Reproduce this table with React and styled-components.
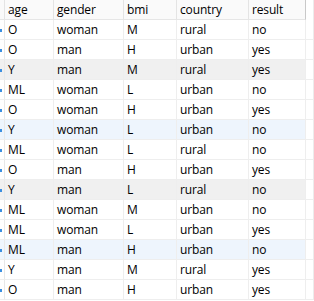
import React from "react";
import styled, { createGlobalStyle } from "styled-components";

const Global = createGlobalStyle`
  html, body { margin: 0; padding: 0; background: #ffffff; }
  body { font-family: "Open Sans", "Noto Sans", sans-serif; font-size: 12px; color: #000000; letter-spacing: -0.15px; }
`;

const COLS = "5px 49px 70px 53px 72px 57px 8px";

const Table = styled.div`
  width: 314px;
  display: grid;
  grid-template-columns: ${COLS};
`;

const HeadCell = styled.div`
  height: 19px;
  line-height: 19px;
  padding-left: ${p => (p.$edge ? 0 : 3)}px;
  background: #fafafa;
  border-bottom: 1px solid #e6e6e6;
  border-right: 1px solid ${p => (p.$last ? "#c9c9c9" : "#e4e4e4")};
  white-space: nowrap;
  overflow: hidden;
`;

const TailHead = styled.div`
  height: 20px;
  background: #ffffff;
  border-right: 1px solid #ececec;
`;

const Cell = styled.div`
  height: 19px;
  line-height: 19px;
  padding-left: 3px;
  background: ${p => p.$bg};
  border-bottom: 1px solid #eeeeee;
  border-right: 1px solid #eeeeee;
  white-space: nowrap;
  overflow: hidden;
`;

const Marker = styled.div`
  height: 19px;
  background: ${p => p.$bg};
  border-bottom: 1px solid #eeeeee;
  border-right: 1px solid #e8e8e8;
  display: flex;
  align-items: center;
`;

const Dot = styled.span`
  width: 2px;
  height: 3px;
  background: #3b8fe0;
  margin-top: 1px;
`;

const Tail = styled.div`
  height: 19px;
  background: #ffffff;
  border-bottom: 1px solid #eeeeee;
  border-right: 1px solid #ececec;
`;

const headers = ["age", "gender", "bmi", "country", "result"];
const rows = [
  ["O", "woman", "M", "rural", "no"],
  ["O", "man", "H", "urban", "yes"],
  ["Y", "man", "M", "rural", "yes"],
  ["ML", "woman", "L", "urban", "no"],
  ["O", "woman", "H", "urban", "yes"],
  ["Y", "woman", "L", "urban", "no"],
  ["ML", "woman", "L", "rural", "no"],
  ["O", "man", "H", "urban", "yes"],
  ["Y", "man", "L", "rural", "no"],
  ["ML", "woman", "M", "urban", "no"],
  ["ML", "woman", "L", "urban", "yes"],
  ["ML", "man", "H", "urban", "no"],
  ["Y", "man", "M", "rural", "yes"],
  ["O", "man", "H", "urban", "yes"],
];

const bgFor = i => {
  if (i === 2 || i === 8) return "#f0f0f0";
  if (i === 5 || i === 11) return "#eef5fd";
  return "#ffffff";
};

export default function App() {
  return (
    <>
      <Global />
      <Table>
        <HeadCell $edge />
        {headers.map((h, i) => (
          <HeadCell key={h} $last={i === headers.length - 1}>{h}</HeadCell>
        ))}
        <TailHead />
        {rows.map((r, i) => (
          <React.Fragment key={i}>
            <Marker $bg={bgFor(i)}><Dot /></Marker>
            {r.map((v, j) => (
              <Cell key={j} $bg={bgFor(i)}>{v}</Cell>
            ))}
            <Tail />
          </React.Fragment>
        ))}
      </Table>
    </>
  );
}
